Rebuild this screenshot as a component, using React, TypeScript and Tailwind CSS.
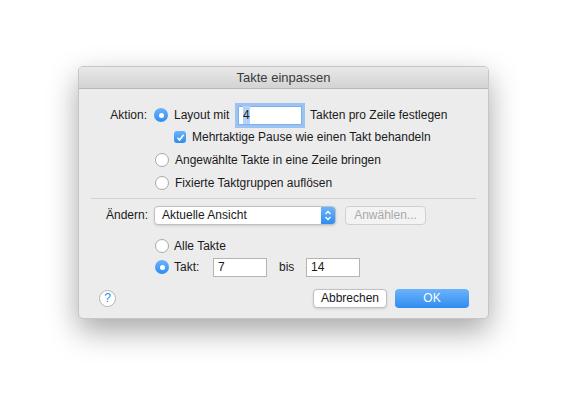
import React from "react";

const Radio = ({ on }: { on?: boolean }) =>
  on ? (
    <span className="w-[14px] h-[14px] rounded-full bg-gradient-to-b from-[#6cb3fa] to-[#2d8cf0] flex items-center justify-center shrink-0">
      <span className="w-[5px] h-[5px] rounded-full bg-white" />
    </span>
  ) : (
    <span className="w-[14px] h-[14px] rounded-full bg-white border border-[#a8a8a8] shrink-0" />
  );

const Field = ({ v, w, focus }: { v: string; w: string; focus?: boolean }) => (
  <div className={`${w} h-[19px] bg-white border ${focus ? "border-[#7fb0ee] ring-[3px] ring-[#9cc3f3]" : "border-[#b4b4b4]"} flex items-center px-[4px] text-[12px]`}>
    {focus ? <span className="bg-[#b3d3f9]">{v}</span> : v}
  </div>
);

export default function App() {
  return (
    <div className="w-[579px] h-[409px] bg-white relative" style={{ fontFamily: '"Liberation Sans", Arial, sans-serif' }}>
      <div className="absolute left-[78px] top-[66px] w-[411px] h-[253px] bg-[#ececec] rounded-[5px] border border-[#c6c6c6] shadow-[0_12px_30px_rgba(0,0,0,0.35)] overflow-hidden text-[12px] text-[#1a1a1a]">
        <div className="h-[22px] bg-gradient-to-b from-[#e9e9e9] to-[#d3d3d3] border-b border-[#b9b9b9] flex items-center justify-center text-[13px] text-[#3a3a3a]">
          Takte einpassen
        </div>
        <div className="pt-[16px]">
          <div className="flex items-center h-[20px]">
            <span className="w-[75px] text-right pr-[7px]">Aktion:</span>
            <Radio on />
            <span className="ml-[6px] w-[64px]">Layout mit</span>
            <Field v="4" w="w-[64px]" focus />
            <span className="ml-[8px]">Takten pro Zeile festlegen</span>
          </div>
          <div className="flex items-center h-[20px] mt-[2px] pl-[95px]">
            <span className="w-[12px] h-[12px] rounded-[3px] bg-gradient-to-b from-[#6cb3fa] to-[#2d8cf0] flex items-center justify-center">
              <svg width="9" height="9" viewBox="0 0 9 9"><path d="M1.5 4.8 L3.6 7 L7.6 1.8" stroke="white" strokeWidth="1.6" fill="none" /></svg>
            </span>
            <span className="ml-[6px]">Mehrtaktige Pause wie einen Takt behandeln</span>
          </div>
          <div className="flex items-center h-[20px] mt-[3px] pl-[76px]">
            <Radio />
            <span className="ml-[6px]">Angewählte Takte in eine Zeile bringen</span>
          </div>
          <div className="flex items-center h-[20px] mt-[3px] pl-[76px]">
            <Radio />
            <span className="ml-[6px]">Fixierte Taktgruppen auflösen</span>
          </div>
          <div className="mx-[12px] mt-[5px] border-t border-[#d2d2d2]" />
          <div className="flex items-center h-[20px] mt-[6px]">
            <span className="w-[75px] text-right pr-[6px]">Ändern:</span>
            <div className="w-[182px] h-[19px] bg-white border border-[#c0c0c0] rounded-[4px] flex items-center justify-between pl-[7px] shadow-sm overflow-hidden">
              <span>Aktuelle Ansicht</span>
              <span className="w-[14px] h-full bg-gradient-to-b from-[#6cb3fa] to-[#2d8cf0] flex items-center justify-center">
                <svg width="8" height="11" viewBox="0 0 8 11"><path d="M1.5 4 L4 1.5 L6.5 4 M1.5 7 L4 9.5 L6.5 7" stroke="white" strokeWidth="1.3" fill="none" /></svg>
              </span>
            </div>
            <div className="ml-[9px] w-[81px] h-[19px] border border-[#d0d0d0] rounded-[4px] bg-[#f3f3f3] flex items-center justify-center text-[#a9a9a9]">Anwählen...</div>
          </div>
          <div className="flex items-center h-[18px] mt-[12px] pl-[76px]">
            <Radio />
            <span className="ml-[5px]">Alle Takte</span>
          </div>
          <div className="flex items-center h-[20px] mt-[2px] pl-[76px]">
            <Radio on />
            <span className="ml-[5px] w-[39px]">Takt:</span>
            <Field v="7" w="w-[54px]" />
            <span className="ml-[12px] w-[27px]">bis</span>
            <Field v="14" w="w-[54px]" />
          </div>
          <div className="flex items-center h-[20px] mt-[11px] pl-[20px] pr-[19px]">
            <span className="w-[17px] h-[17px] rounded-full bg-white border border-[#b4b4b4] flex items-center justify-center text-[#2d8cf0] text-[12px]">?</span>
            <div className="flex-1" />
            <div className="w-[74px] h-[19px] bg-white border border-[#c0c0c0] rounded-[4px] flex items-center justify-center shadow-sm">Abbrechen</div>
            <div className="ml-[8px] w-[74px] h-[19px] rounded-[4px] bg-gradient-to-b from-[#6cb3fa] to-[#2d8cf0] text-white flex items-center justify-center">OK</div>
          </div>
        </div>
      </div>
    </div>
  );
}
